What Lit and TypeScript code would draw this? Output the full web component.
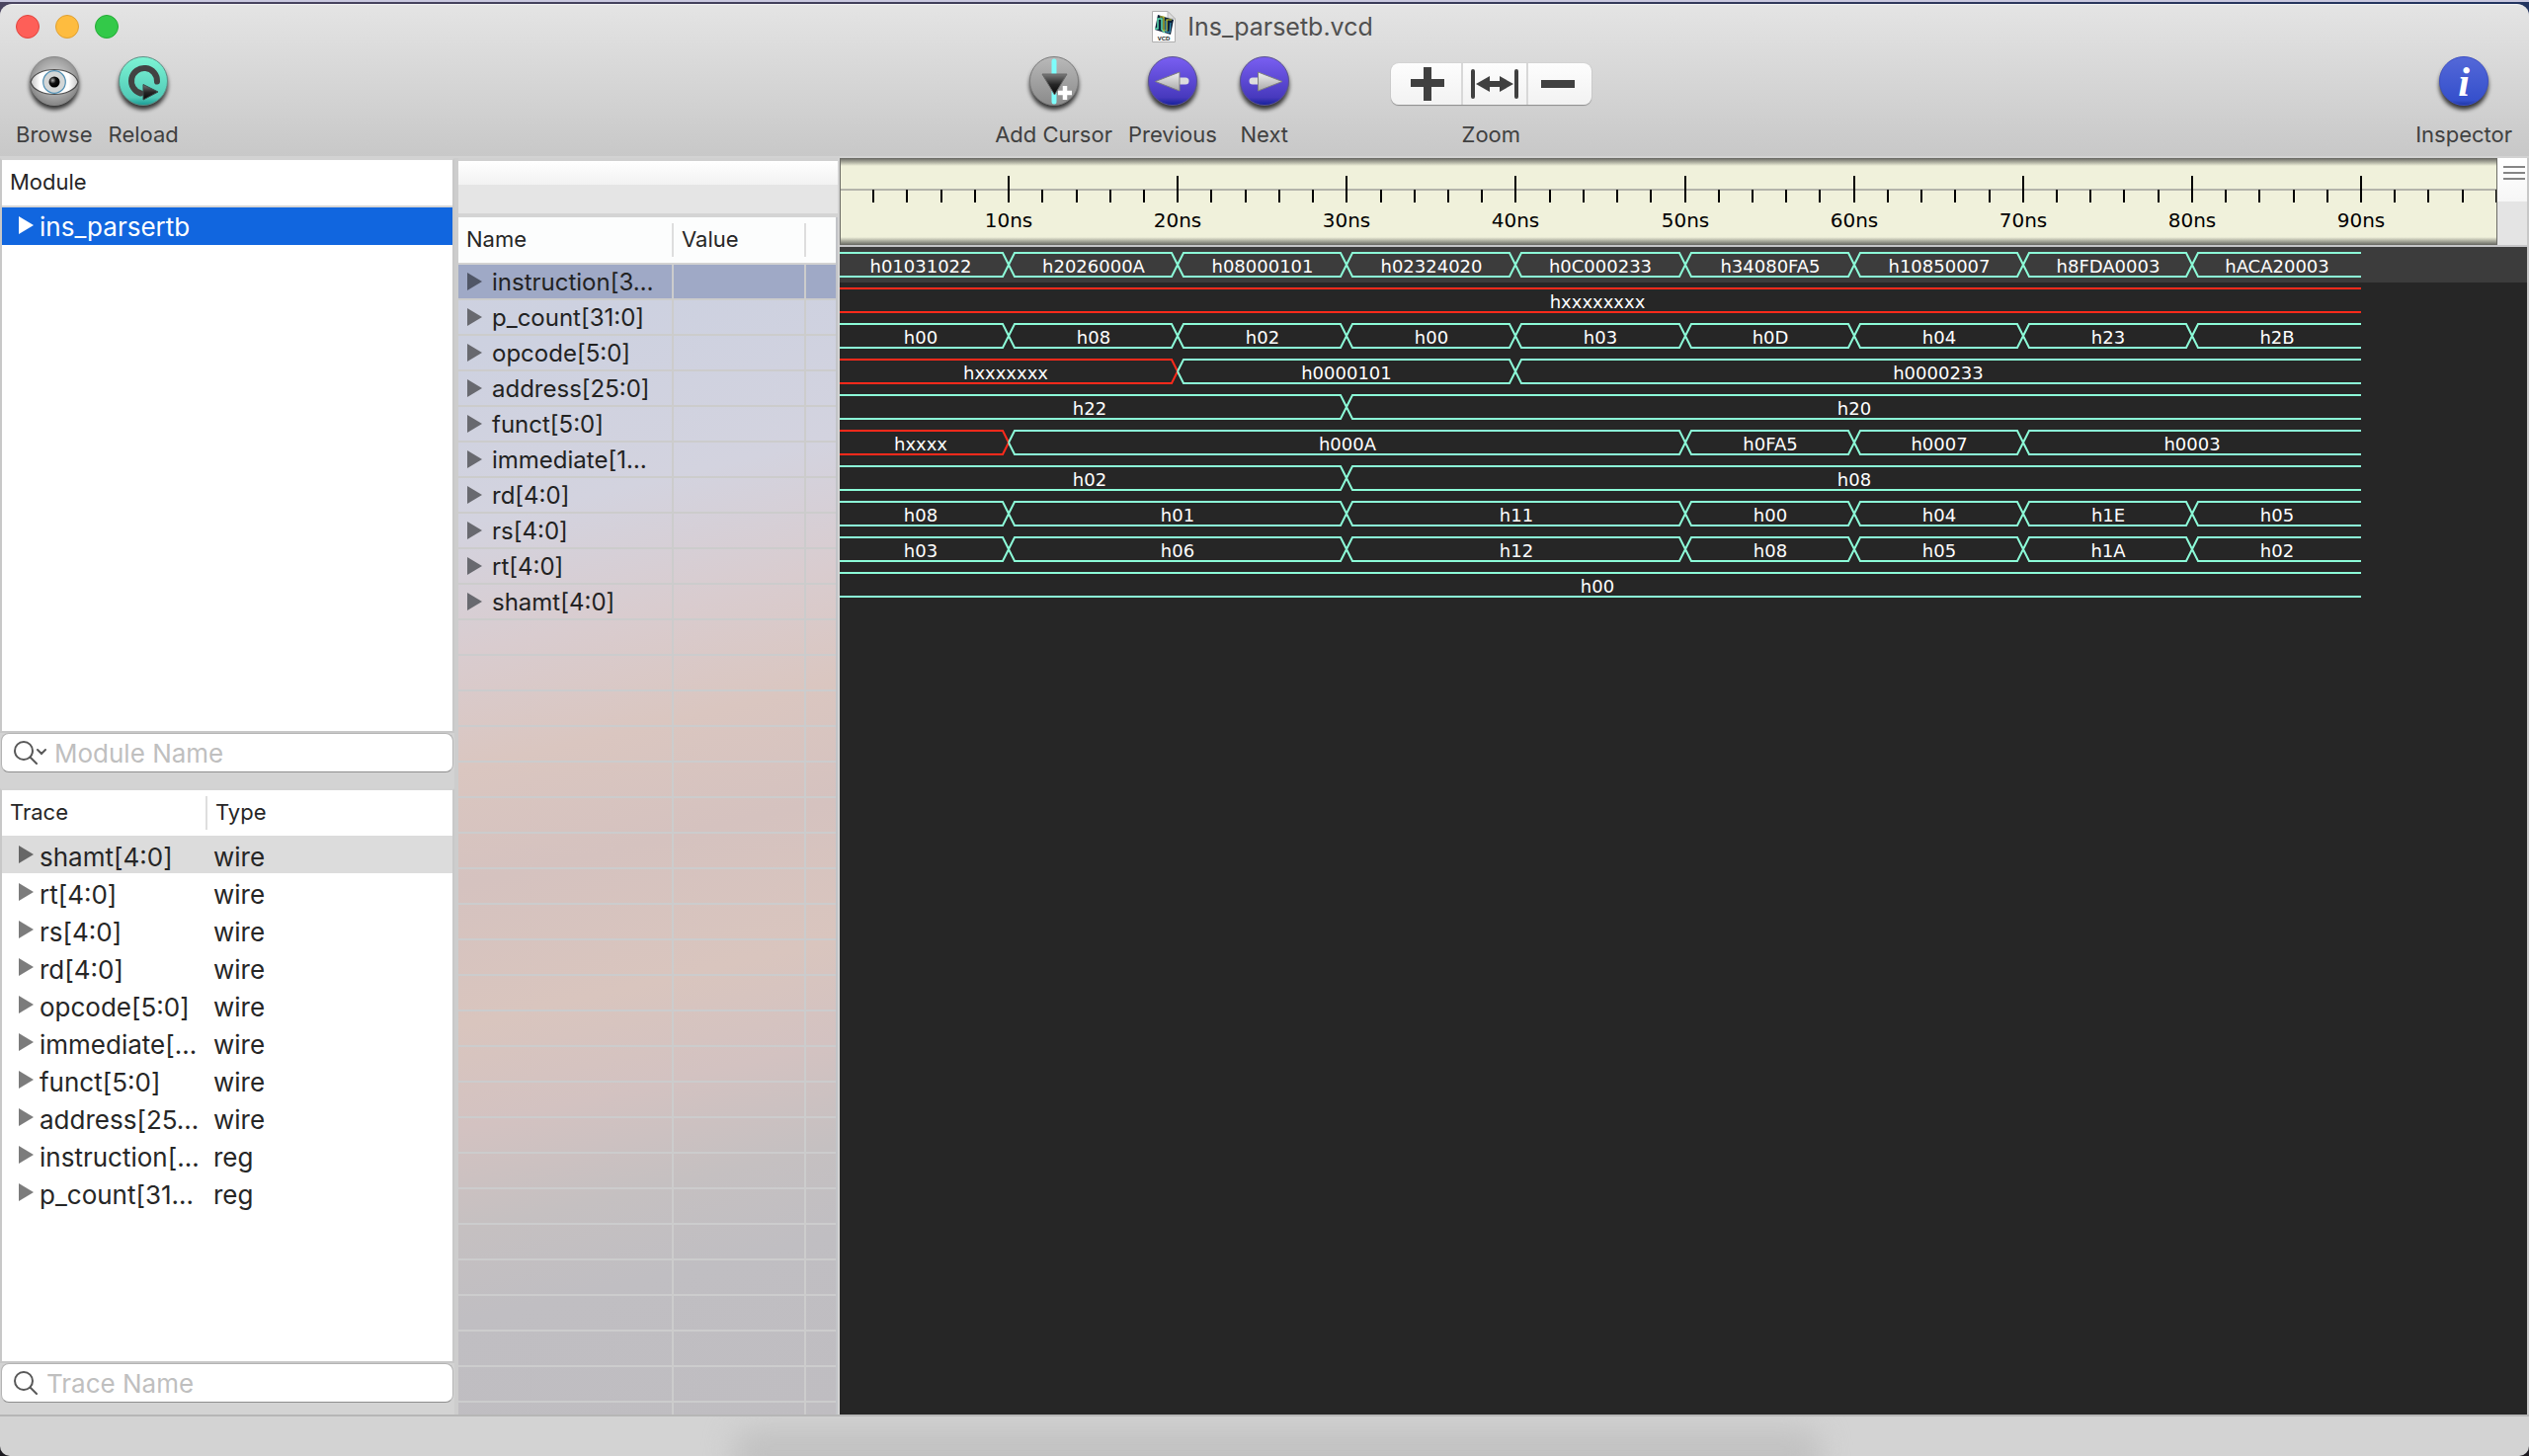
import { LitElement, html, svg, css, nothing } from "lit";
import { customElement, property } from "lit/decorators.js";
import { classMap } from "lit/directives/class-map.js";

type Segment = [start: number, end: number, label: string];

interface Signal {
  name: string;
  segments: Segment[];
}

const END_NS = 90;
const RULER_NS = 98;
const PX_PER_NS = 1540 / END_NS;
const LANE = 36;
const LEAD = 7;

const SIGNALS: Signal[] = [
  {
    name: "instruction[3…",
    segments: [
      [0, 10, "h01031022"], [10, 20, "h2026000A"], [20, 30, "h08000101"],
      [30, 40, "h02324020"], [40, 50, "h0C000233"], [50, 60, "h34080FA5"],
      [60, 70, "h10850007"], [70, 80, "h8FDA0003"], [80, 90, "hACA20003"],
    ],
  },
  { name: "p_count[31:0]", segments: [[0, 90, "hxxxxxxxx"]] },
  {
    name: "opcode[5:0]",
    segments: [
      [0, 10, "h00"], [10, 20, "h08"], [20, 30, "h02"], [30, 40, "h00"], [40, 50, "h03"],
      [50, 60, "h0D"], [60, 70, "h04"], [70, 80, "h23"], [80, 90, "h2B"],
    ],
  },
  { name: "address[25:0]", segments: [[0, 20, "hxxxxxxx"], [20, 40, "h0000101"], [40, 90, "h0000233"]] },
  { name: "funct[5:0]", segments: [[0, 30, "h22"], [30, 90, "h20"]] },
  {
    name: "immediate[1…",
    segments: [[0, 10, "hxxxx"], [10, 50, "h000A"], [50, 60, "h0FA5"], [60, 70, "h0007"], [70, 90, "h0003"]],
  },
  { name: "rd[4:0]", segments: [[0, 30, "h02"], [30, 90, "h08"]] },
  {
    name: "rs[4:0]",
    segments: [
      [0, 10, "h08"], [10, 30, "h01"], [30, 50, "h11"], [50, 60, "h00"],
      [60, 70, "h04"], [70, 80, "h1E"], [80, 90, "h05"],
    ],
  },
  {
    name: "rt[4:0]",
    segments: [
      [0, 10, "h03"], [10, 30, "h06"], [30, 50, "h12"], [50, 60, "h08"],
      [60, 70, "h05"], [70, 80, "h1A"], [80, 90, "h02"],
    ],
  },
  { name: "shamt[4:0]", segments: [[0, 90, "h00"]] },
];

const TRACES: [string, string][] = [
  ["shamt[4:0]", "wire"],
  ["rt[4:0]", "wire"],
  ["rs[4:0]", "wire"],
  ["rd[4:0]", "wire"],
  ["opcode[5:0]", "wire"],
  ["immediate[…", "wire"],
  ["funct[5:0]", "wire"],
  ["address[25…", "wire"],
  ["instruction[…", "reg"],
  ["p_count[31…", "reg"],
];

const toX = (ns: number) => Math.round(ns * PX_PER_NS);

const shared = css`
  * {
    box-sizing: border-box;
  }
  button {
    appearance: none;
    border: 0;
    padding: 0;
    margin: 0;
    background: none;
    font: inherit;
    color: inherit;
  }
  svg {
    display: block;
  }
  table {
    border-collapse: separate;
    border-spacing: 0;
    table-layout: fixed;
    width: 100%;
  }
  th {
    font-weight: 400;
    font-size: 22px;
    text-align: left;
    padding: 0 0 2px;
    height: 46px;
    line-height: 42px;
    color: #262626;
    white-space: nowrap;
  }
  td {
    padding: 0;
    white-space: nowrap;
    overflow: hidden;
  }
  .cell {
    display: flex;
    align-items: center;
  }
`;

const triangle = html`<svg width="15" height="18" viewBox="0 0 15 18" aria-hidden="true">
  <path d="M0 0L15 9L0 18Z" fill="currentColor" />
</svg>`;

@customElement("wave-toolbar")
export class WaveToolbar extends LitElement {
  static styles = [
    shared,
    css`
      :host {
        display: block;
        background: linear-gradient(#e4e4e4, #c8c8c8);
        border-top: 1px solid #f4f4f4;
        border-bottom: 2px solid #d2d2d2;
        border-radius: 12px 12px 0 0;
        color: #404040;
      }
      .title {
        display: grid;
        grid-template-columns: 1fr auto 1fr;
        align-items: center;
        height: 43px;
      }
      .lights {
        display: flex;
        gap: 16px;
        padding-left: 16px;
      }
      .light {
        width: 24px;
        height: 24px;
        border-radius: 50%;
        border: 1px solid #e0443e;
        background: #fe5f58;
      }
      .min {
        background: #febc3f;
        border-color: #dea034;
      }
      .max {
        background: #33c949;
        border-color: #24ab36;
      }
      .name {
        display: flex;
        align-items: center;
        gap: 12px;
        padding-right: 4px;
        font-size: 25px;
        line-height: 32px;
        margin: 0;
        font-weight: 400;
        color: #505050;
      }
      .tools {
        display: flex;
        justify-content: space-between;
        padding: 7px 17px 0 16px;
        height: 110px;
      }
      .group {
        display: flex;
        gap: 16px;
      }
      .center {
        padding-right: 8px;
      }
      .tool {
        display: flex;
        flex-direction: column;
        align-items: center;
        min-width: 64px;
        font-size: 22px;
        line-height: 28px;
        gap: 7px;
      }
      .zoom {
        margin-left: 80px;
      }
      .segments {
        display: flex;
        height: 42px;
        margin: 9px 0 9px;
        border-radius: 8px;
        background: linear-gradient(#fdfdfd, #f2f2f2);
        box-shadow: 0 1px 1px #8c8c8c, 0 0 1px #a8a8a8;
      }
      .segments button {
        display: flex;
        align-items: center;
        justify-content: center;
        width: 66px;
        border-left: 2px solid #d8d8d8;
      }
      .segments button:first-child {
        width: 71px;
        padding-left: 4px;
        border-left: 0;
      }
      .segments button:last-child {
        padding-right: 4px;
      }
      .i {
        font: italic bold 42px "Liberation Serif", serif;
      }
      .vcd {
        font: bold 6px "Liberation Sans", sans-serif;
      }
    `,
  ];

  private ball(fill: string, stroke: string, glyph: unknown) {
    return html`<svg width="60" height="60" viewBox="0 0 60 60" aria-hidden="true">
      <defs>
        <linearGradient id="gray" x1="0" y1="0" x2="0" y2="1">
          <stop offset="0" stop-color="#b9b9b9" /><stop offset="1" stop-color="#8a8a8a" />
        </linearGradient>
        <radialGradient id="steel" cx=".5" cy=".45" r=".55">
          <stop offset="0" stop-color="#d8d8d8" /><stop offset=".7" stop-color="#a4a4a4" />
          <stop offset="1" stop-color="#858585" />
        </radialGradient>
        <linearGradient id="mint" x1="0" y1="0" x2="0" y2="1">
          <stop offset="0" stop-color="#7df5d4" /><stop offset=".84" stop-color="#52cbb8" />
          <stop offset="1" stop-color="#189a94" />
        </linearGradient>
        <linearGradient id="violet" x1="0" y1="0" x2="0" y2="1">
          <stop offset="0" stop-color="#7a5ff2" /><stop offset=".84" stop-color="#4739bd" />
          <stop offset="1" stop-color="#15209a" />
        </linearGradient>
        <linearGradient id="royal" x1="0" y1="0" x2="0" y2="1">
          <stop offset="0" stop-color="#5468d8" /><stop offset=".9" stop-color="#3550cc" />
          <stop offset="1" stop-color="#1d35a4" />
        </linearGradient>
        <linearGradient id="dark" x1="0" y1="0" x2="0" y2="1">
          <stop offset="0" stop-color="#7a7a7a" /><stop offset=".5" stop-color="#262626" />
          <stop offset="1" stop-color="#050505" />
        </linearGradient>
        <linearGradient id="light" x1="0" y1="0" x2="0" y2="1">
          <stop offset="0" stop-color="#f0f0f0" /><stop offset="1" stop-color="#a8a8a8" />
        </linearGradient>
        <linearGradient id="eye" x1="0" y1="0" x2="1" y2="0">
          <stop offset="0" stop-color="#c4c4c4" /><stop offset=".2" stop-color="#fff" />
          <stop offset=".8" stop-color="#fff" /><stop offset="1" stop-color="#c4c4c4" />
        </linearGradient>
        <radialGradient id="pupil" cx=".35" cy=".35" r=".6">
          <stop offset="0" stop-color="#b0b0b0" /><stop offset=".5" stop-color="#111" />
          <stop offset="1" stop-color="#000" />
        </radialGradient>
        <filter id="soft" x="-20%" y="-20%" width="140%" height="140%">
          <feGaussianBlur stdDeviation="2" />
        </filter>
      </defs>
      <circle cx="30" cy="31" r="25" fill="#000" opacity=".75" filter="url(#soft)" />
      <circle cx="30" cy="27" r="24.5" fill=${fill} stroke=${stroke} />
      ${glyph}
    </svg>`;
  }

  render() {
    const eye = svg`
      <path d="M6 28C8 20 19 15.500 30 15.500C41 15.500 52 20 54 28C52 36 41 40.500 30 40.500C19 40.500 8 36 6 28Z"
        fill="url(#eye)" stroke="#4c4c4c" stroke-width="1.2" />
      <circle cx="30" cy="28" r="11.3" fill="#d3d6d6" stroke="#5290b4" stroke-width="1.2" />
      <circle cx="30" cy="28" r="5.5" fill="url(#pupil)" />`;
    const reload = svg`
      <path d="M44 27.500A13 13 0 1 0 27.500 39.500" fill="none" stroke="#424242" stroke-width="6" stroke-linecap="round" />
      <path d="M30 30.500L45 38L30 46Z" fill="url(#dark)" stroke="#3c4a48" />`;
    const cursor = svg`
      <path d="M30 7V48" stroke="#7dfdfb" stroke-width="5" stroke-linecap="round" />
      <path d="M18 20H43L30.500 41Z" fill="url(#dark)" stroke="#686868" />
      <path d="M41 32V46M34 39H48" stroke="#fff" stroke-width="4.500" />`;
    const prev = svg`
      <path d="M35 27H43" stroke="#ddd" stroke-width="7" stroke-linecap="round" />
      <path d="M12.500 27.500L37 18V37Z" fill="url(#light)" stroke="#808080" />`;
    const next = svg`
      <path d="M18 27H26" stroke="#ddd" stroke-width="7" stroke-linecap="round" />
      <path d="M48 27.500L23.500 18V37Z" fill="url(#light)" stroke="#808080" />`;
    const info = svg`<text class="i" x="30" y="42" fill="#fff" text-anchor="middle">i</text>`;

    return html`
      <div class="title">
        <div class="lights">
          <button class="light" aria-label="Close"></button>
          <button class="light min" aria-label="Minimize"></button>
          <button class="light max" aria-label="Full screen"></button>
        </div>
        <h1 class="name">
          <svg width="24" height="32" viewBox="0 0 24 32" aria-hidden="true">
            <path d="M.5 .5H16L23.500 8V31.500H.5Z" fill="#fdfdfd" stroke="#b0b0b0" />
            <path d="M16 .5V8H23.500Z" fill="#dcdcdc" stroke="#b8b8b8" />
            <path d="M6 4L22 9L19 24L3 19Z" fill="#0d2038" />
            <path d="M3 18L6 18V8H10V19L13 22" fill="none" stroke="#5fe0b4" stroke-width="1.500" />
            <path d="M8 6H12V20H15V9H20" fill="none" stroke="#d5d22c" stroke-width="1.200" />
            <path d="M14 10V21L18 22L19 12" fill="none" stroke="#3aa0c8" stroke-width="1" />
            <text class="vcd" x="12" y="30" text-anchor="middle" fill="#222">VCD</text>
          </svg>
          Ins_parsetb.vcd
        </h1>
      </div>
      <div class="tools">
        <div class="group">
          <button class="tool">${this.ball("url(#steel)", "#8a8a8a", eye)}Browse</button>
          <button class="tool">${this.ball("url(#mint)", "#5f8f86", reload)}Reload</button>
        </div>
        <div class="group center">
          <button class="tool">${this.ball("url(#gray)", "#7c7c7c", cursor)}Add Cursor</button>
          <button class="tool">${this.ball("url(#violet)", "#5b5490", prev)}Previous</button>
          <button class="tool">${this.ball("url(#violet)", "#5b5490", next)}Next</button>
          <div class="tool zoom" role="group" aria-labelledby="zoom-label">
            <div class="segments">
              <button aria-label="Zoom in">
                <svg width="34" height="34" viewBox="0 0 34 34">
                  <path d="M17 0V34M0 16H34" stroke="#404040" stroke-width="8" />
                </svg>
              </button>
              <button aria-label="Zoom to fit">
                <svg width="48" height="30" viewBox="0 0 48 30">
                  <path d="M2 2V28M46 2V28" stroke="#404040" stroke-width="4" stroke-linecap="round" />
                  <path d="M5 15L19 7V12H29V7L43 15L29 23V18H19V23Z" fill="#404040" />
                </svg>
              </button>
              <button aria-label="Zoom out">
                <svg width="34" height="8" viewBox="0 0 34 8"><rect width="34" height="8" fill="#404040" /></svg>
              </button>
            </div>
            <span id="zoom-label">Zoom</span>
          </div>
        </div>
        <div class="group">
          <button class="tool">${this.ball("url(#royal)", "#3c4fc4", info)}Inspector</button>
        </div>
      </div>
    `;
  }
}

@customElement("search-field")
export class SearchField extends LitElement {
  @property() label = "";
  @property({ type: Boolean }) menu = false;

  static styles = [
    shared,
    css`
      :host {
        display: block;
        padding: 0 1px;
      }
      .field {
        display: flex;
        align-items: center;
        height: 40px;
        padding-left: 12px;
        gap: 8px;
        background: #fff;
        border: 1px solid #b4b4b4;
        border-bottom-color: #8e8e8e;
        border-radius: 8px;
      }
      input {
        flex: 1;
        min-width: 0;
        border: 0;
        padding: 1px 0 0;
        outline: 0;
        background: none;
        font: inherit;
        font-size: 26px;
        line-height: 32px;
        color: #262626;
      }
      input::placeholder {
        color: #bfbfbf;
        opacity: 1;
      }
    `,
  ];

  render() {
    return html`<label class="field">
      <svg width=${this.menu ? 33 : 25} height="24" viewBox="0 0 ${this.menu ? 33 : 25} 24" aria-hidden="true"
        fill="none" stroke="#585858" stroke-width="2" stroke-linecap="round">
        <circle cx="10" cy="10" r="9" />
        <path d="M16.500 16.500L23 23" />
        ${this.menu ? svg`<path d="M24 9L28 13L32 9" />` : nothing}
      </svg>
      <input type="text" placeholder=${this.label} aria-label=${this.label} />
    </label>`;
  }
}

@customElement("module-sidebar")
export class ModuleSidebar extends LitElement {
  static styles = [
    shared,
    css`
      :host {
        display: flex;
        flex-direction: column;
        gap: 16px;
        padding-bottom: 12px;
        width: 460px;
        background: #d3d3d3;
        color: #262626;
      }
      .pane {
        display: flex;
        flex-direction: column;
        flex: 1;
        min-height: 0;
      }
      .list {
        flex: 1;
        min-height: 0;
        overflow: hidden;
        background: #fff;
        border: 2px solid #c8c8c8;
        border-top-color: #d2d2d2;
      }
      th {
        padding-left: 8px;
      }
      .module th {
        height: 48px;
        border-bottom: 2px solid #d6d6d6;
      }
      .split {
        width: 208px;
        background: linear-gradient(#dedede, #dedede) right center / 2px 34px no-repeat;
      }
      td {
        height: 38px;
        font-size: 26px;
        line-height: 32px;
      }
      .cell {
        padding-left: 17px;
        gap: 6px;
      }
      .label {
        padding-top: 4px;
      }
      .disc {
        color: #7c7c7c;
      }
      .module .on td {
        background: #1166df;
        color: #fff;
      }
      .module .disc {
        color: #fff;
      }
      .module .cell {
        padding-bottom: 2px;
      }
      .trace .on td {
        background: #dcdcdc;
      }
      .trace .on .disc {
        color: #666;
      }
      .trace .label {
        padding-top: 6px;
      }
      .trace .type {
        padding: 6px 0 0 6px;
      }
    `,
  ];

  render() {
    return html`
      <section class="pane">
        <div class="list">
          <table class="module">
            <thead><tr><th scope="col">Module</th></tr></thead>
            <tbody>
              <tr class="on">
                <td>
                  <div class="cell">
                    <button class="disc" aria-label="Expand">${triangle}</button>
                    <span class="label">ins_parsertb</span>
                  </div>
                </td>
              </tr>
            </tbody>
          </table>
        </div>
        <search-field label="Module Name" menu></search-field>
      </section>
      <section class="pane">
        <div class="list">
          <table class="trace">
            <thead><tr><th scope="col" class="split">Trace</th><th scope="col">Type</th></tr></thead>
            <tbody>
              ${TRACES.map(
                ([name, type], i) => html`<tr class=${classMap({ on: i === 0 })}>
                  <td>
                    <div class="cell">
                      <button class="disc" aria-label="Expand">${triangle}</button>
                      <span class="label">${name}</span>
                    </div>
                  </td>
                  <td class="type">${type}</td>
                </tr>`
              )}
            </tbody>
          </table>
        </div>
        <search-field label="Trace Name"></search-field>
      </section>
    `;
  }
}

@customElement("signal-list")
export class SignalList extends LitElement {
  static styles = [
    shared,
    css`
      :host {
        display: flex;
        flex-direction: column;
        width: 390px;
        border-left: 4px solid #cdcdcd;
        border-right: 2px solid #d3d3d3;
        color: #222;
      }
      .band {
        height: 60px;
        border-top: 3px solid #d0d0d0;
        border-bottom: 4px solid #d4d4d4;
        background: linear-gradient(#fff, #f2f2f2 24px, #e5e5e5 24px);
      }
      .rows {
        flex: 1;
        border-right: 2px solid #c2c4c8;
        background: linear-gradient(#ccc, #ccc) 216px 48px / 2px 100% no-repeat,
          linear-gradient(#ccc, #ccc) 350px 48px / 2px 100% no-repeat,
          repeating-linear-gradient(transparent 0 34px, #cccccd 34px 36px) 0 48px / 100% 1800px no-repeat,
          linear-gradient(167deg, #cfd2e0 0%, #cdd1e0 10%, #d3d3df 24%, #d9cccf 34%, #dac6c0 43%,
            #d5c2bf 52%, #d9c5be 63%, #d3c2c1 71%, #c5c0c1 79%, #c0bec2 86%, #bfbdc1 100%);
      }
      th {
        height: 48px;
        padding-left: 8px;
        background-color: #fcfdfd;
        background-image: linear-gradient(#dedede, #dedede);
        background-repeat: no-repeat;
        background-position: right center;
        background-size: 2px 34px;
        border-bottom: 2px solid #d2d2d2;
      }
      th:last-child {
        background-image: none;
      }
      .name {
        width: 218px;
      }
      .value {
        width: 134px;
      }
      td {
        height: 36px;
        font-size: 24px;
        line-height: 32px;
        border-bottom: 2px solid #cccccc;
        border-right: 2px solid #cccccc;
      }
      td:last-child {
        border-right: 0;
      }
      .on td {
        background: #9fa9c6;
      }
      .cell {
        padding-left: 9px;
        gap: 10px;
      }
      .label {
        padding-top: 2px;
      }
      .disc {
        color: #68696f;
      }
      .on .disc {
        color: #505666;
      }
    `,
  ];

  render() {
    return html`
      <div class="band"></div>
      <div class="rows">
        <table>
          <thead>
            <tr>
              <th scope="col" class="name">Name</th>
              <th scope="col" class="value">Value</th>
              <th></th>
            </tr>
          </thead>
          <tbody>
            ${SIGNALS.map(
              (s, i) => html`<tr class=${classMap({ on: i === 0 })}>
                <td>
                  <div class="cell">
                    <button class="disc" aria-label="Expand">${triangle}</button>
                    <span class="label">${s.name}</span>
                  </div>
                </td>
                <td></td>
                <td></td>
              </tr>`
            )}
          </tbody>
        </table>
      </div>
    `;
  }
}

@customElement("wave-view")
export class WaveView extends LitElement {
  static styles = [
    shared,
    css`
      :host {
        display: flex;
        flex-direction: column;
        min-width: 0;
        background: #262626;
        border-right: 2px solid #c8c8c8;
      }
      .head {
        display: flex;
        border-bottom: 2px solid #c6c6c8;
      }
      .ruler {
        flex: 1;
        min-width: 0;
        height: 88px;
        overflow: hidden;
        border-right: 1px solid #6c6c66;
        background: linear-gradient(#64645f, #a9aa9c 4px, #f0f1db 8px, #f0f1db 80px, #a9aa9c 84px, #64645f 88px);
      }
      .corner {
        width: 30px;
        padding: 6px 0 0 6px;
        background: linear-gradient(#fff, #f6f6f6 44px, #e4e4e4 44px);
      }
      .lanes {
        background: linear-gradient(#3c3c3c, #3c3c3c) 0 0 / 100% 36px no-repeat;
        overflow: hidden;
      }
      .tick {
        font: 20px "DejaVu Sans", sans-serif;
        text-anchor: middle;
      }
      .val {
        font: 18px "DejaVu Sans", sans-serif;
        fill: #fff;
        text-anchor: middle;
      }
      .wave {
        fill: none;
        stroke-width: 2;
        stroke: #8cfbd8;
      }
      .bad {
        stroke: #ff2a1b;
      }
    `,
  ];

  private ticks() {
    const out = [];
    for (let t = 2; t <= RULER_NS; t += 2) {
      const major = t % 10 === 0;
      out.push(svg`<rect x=${toX(t) - 1} y=${major ? 18 : 32} width="2" height=${major ? 27 : 13} />`);
      if (major) out.push(svg`<text class="tick" x=${toX(t)} y="70">${t}ns</text>`);
    }
    return out;
  }

  private segment([start, end, label]: Segment, lane: number) {
    const top = lane * LANE + 6;
    const mid = top + 12;
    const bottom = top + 24;
    const first = start === 0;
    const last = end === END_NS;
    const a = first ? -LEAD : toX(start);
    const b = toX(end);
    const left = first ? a : a + 6;
    const right = last ? b : b - 6;
    const upper = `M${a} ${first ? top : mid}L${left} ${top}H${right}L${b} ${last ? top : mid}`;
    const lower = `M${a} ${first ? bottom : mid}L${left} ${bottom}H${right}L${b} ${last ? bottom : mid}`;
    return svg`
      <path class=${classMap({ wave: true, bad: label.includes("x") })} d="${upper}${lower}" />
      <text class="val" x=${Math.round((a + b) / 2)} y=${lane * LANE + 26}>${label}</text>`;
  }

  render() {
    return html`
      <div class="head">
        <div class="ruler">
          <svg width="1710" height="88">
            <rect y="31" width="1710" height="2" fill="#b4b4ab" />
            <rect width="1" height="88" fill="#6c6c66" />
            ${this.ticks()}
          </svg>
        </div>
        <div class="corner">
          <button aria-label="Options">
            <svg width="22" height="14" viewBox="0 0 22 14">
              <path d="M0 1H22M0 7H22M0 13H22" stroke="#858585" stroke-width="2" />
            </svg>
          </button>
        </div>
      </div>
      <div class="lanes">
        <svg width="1710" height=${SIGNALS.length * LANE}>
          ${SIGNALS.map((s, i) => s.segments.map((seg) => this.segment(seg, i)))}
        </svg>
      </div>
    `;
  }
}

@customElement("app-root")
export class AppRoot extends LitElement {
  static styles = [
    shared,
    css`
      :host {
        display: flex;
        flex-direction: column;
        height: 100vh;
        overflow: hidden;
        border-top: 2px solid #c9c8df;
        box-sizing: border-box;
        background: #1c1a20;
        font-family: Inter, "Open Sans", sans-serif;
      }
      .desk {
        padding-top: 2px;
        background: linear-gradient(90deg, #4a4560, #3c3c58 50%, #22345f);
      }
      .content {
        flex: 1;
        min-height: 0;
        display: grid;
        grid-template-columns: auto auto minmax(0, 1fr);
        background: #d3d3d3;
      }
      .content > * {
        min-height: 0;
        overflow: hidden;
      }
      .status {
        position: relative;
        height: 42px;
        overflow: hidden;
        background: #d3d3d3;
        border-top: 2px solid #b6b6b6;
        border-radius: 0 0 10px 10px;
      }
      .glow {
        position: absolute;
        left: 29%;
        right: 28%;
        top: 12px;
        height: 60px;
        border-radius: 20px;
        background: #c2c2c2;
        filter: blur(14px);
      }
    `,
  ];

  render() {
    return html`
      <div class="desk"><wave-toolbar></wave-toolbar></div>
      <main class="content">
        <module-sidebar></module-sidebar>
        <signal-list></signal-list>
        <wave-view></wave-view>
      </main>
      <footer class="status"><div class="glow"></div></footer>
    `;
  }
}
